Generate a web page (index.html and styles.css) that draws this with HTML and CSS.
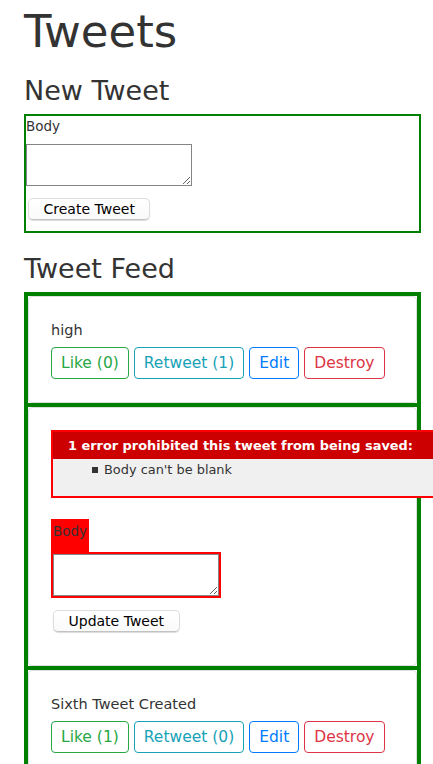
FILE: index.html
```html
<!DOCTYPE html>
<html>
<head>
<meta charset="utf-8">
<title>Tweets</title>
<link rel="stylesheet" href="styles.css">
</head>
<body>
<h1 class="title">Tweets</h1>
<h2 class="section-title">New Tweet</h2>
<form class="new-tweet">
  <label class="field-label">Body</label>
  <textarea class="body-input"></textarea>
  <button class="mac-btn" type="button">Create Tweet</button>
</form>
<h2 class="section-title feed-title">Tweet Feed</h2>
<div class="feed">
  <div class="feed-item">
    <div class="card">
      <p class="tweet-text">high</p>
      <div class="actions">
        <a class="btn btn-success">Like (0)</a>
        <a class="btn btn-info">Retweet (1)</a>
        <a class="btn btn-primary">Edit</a>
        <a class="btn btn-danger">Destroy</a>
      </div>
    </div>
  </div>
  <div class="feed-item">
    <div class="card">
      <form class="edit-form">
        <div class="error-box">
          <h2 class="error-title">1 error prohibited this tweet from being saved:</h2>
          <ul class="error-list">
            <li>Body can't be blank</li>
          </ul>
        </div>
        <div class="field-error">
          <label class="field-label error-label">Body</label>
        </div>
        <div class="field-error">
          <textarea class="body-input"></textarea>
        </div>
        <button class="mac-btn update-btn" type="button">Update Tweet</button>
      </form>
    </div>
  </div>
  <div class="feed-item">
    <div class="card">
      <p class="tweet-text">Sixth Tweet Created</p>
      <div class="actions">
        <a class="btn btn-success">Like (1)</a>
        <a class="btn btn-info">Retweet (0)</a>
        <a class="btn btn-primary">Edit</a>
        <a class="btn btn-danger">Destroy</a>
      </div>
    </div>
  </div>
</div>
</body>
</html>
```
FILE: styles.css
```css
html {
  overflow-x: hidden;
}

body {
  margin: 0;
  padding: 5px 12px 0 24px;
  font-family: "DejaVu Sans", Verdana, sans-serif;
  color: #333;
  background: #fff;
  overflow-x: hidden;
}

.title {
  font-size: 45px;
  line-height: 53px;
  font-weight: normal;
  margin: 0 0 17px;
}

.section-title {
  font-size: 27px;
  line-height: 31px;
  font-weight: normal;
  margin: 0 0 8px;
}

.feed-title {
  margin-top: 20px;
}

.new-tweet {
  border: 2px solid #008000;
  display: flex;
  flex-direction: column;
  align-items: flex-start;
  padding-bottom: 11px;
  margin: 0;
}

.field-label {
  font-size: 13.5px;
  line-height: 20px;
  margin-bottom: 8px;
}

.body-input {
  display: block;
  width: 166px;
  height: 42px;
  box-sizing: border-box;
  border: 1px solid #858585;
  margin: 0;
  padding: 2px;
  font: 13px "DejaVu Sans Mono", monospace;
  resize: both;
  background: #fff;
}

.mac-btn {
  margin: 12px 0 0 2px;
  height: 22px;
  padding: 0 14.5px;
  font: 14px "DejaVu Sans", Verdana, sans-serif;
  color: #000;
  background: linear-gradient(#fff, #fafafa);
  border: 1px solid #dcdcdc;
  border-bottom-color: #c2c2c2;
  border-radius: 5px;
  box-shadow: 0 1px 1px rgba(0, 0, 0, 0.14);
}

.feed {
  border: 4px solid #008000;
  border-bottom: none;
}

.feed-item + .feed-item {
  border-top: 4px solid #008000;
}

.card {
  border: 1px solid #dfdfdf;
  border-radius: 4px;
  padding: 20px 20px 23px 22px;
  background: #fff;
}

.tweet-text {
  margin: 0 0 4px;
  font-size: 14.5px;
  line-height: 26px;
  color: #333;
}

.actions {
  display: flex;
  gap: 5px;
}

.btn {
  display: block;
  font-size: 15.5px;
  line-height: 22px;
  padding: 4px 9px;
  border: 1px solid currentColor;
  border-radius: 4px;
  background: #fff;
}

.btn-success { color: #28a745; }
.btn-info { color: #17a2b8; }
.btn-primary { color: #007bff; }
.btn-danger { color: #dc3545; }

.edit-form {
  display: flex;
  flex-direction: column;
  align-items: flex-start;
  margin: 2px 0 0;
}

.error-box {
  width: 450px;
  flex-shrink: 0;
  border: 2px solid #f00;
  padding: 7px 7px 0;
  margin-bottom: 21px;
  background: #f0f0f0;
}

.error-title {
  margin: -7px -7px 0;
  padding: 5px 5px 5px 15px;
  font-size: 12.9px;
  line-height: 17px;
  font-weight: bold;
  color: #fff;
  background: #c00;
  text-align: left;
}

.error-list {
  margin: 0 0 16px;
  padding-left: 32px;
  list-style: none;
}

.error-list li {
  font-size: 12.9px;
  line-height: 21px;
  color: #333;
}

.error-list li::before {
  content: "";
  display: inline-block;
  width: 6px;
  height: 6px;
  background: #333;
  margin-right: 6px;
  vertical-align: 1px;
}

.field-error {
  padding: 2px;
  background: #f00;
  display: table;
}

.error-label {
  display: block;
  line-height: 21px;
}

.update-btn {
  margin-bottom: 10px;
}
```
